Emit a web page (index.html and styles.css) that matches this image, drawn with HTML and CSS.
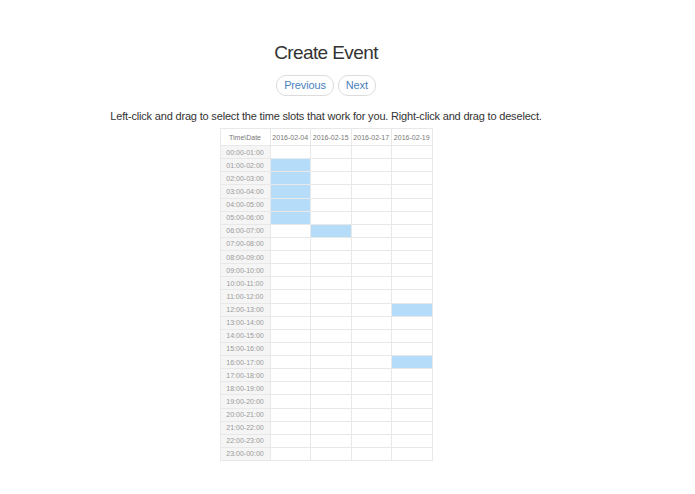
FILE: index.html
```html
<!DOCTYPE html>
<html>
<head>
<meta charset="utf-8">
<link rel="stylesheet" href="styles.css">
</head>
<body>
<div class="page">
  <h1 class="title">Create Event</h1>
  <div class="nav">
    <button class="btn">Previous</button>
    <button class="btn">Next</button>
  </div>
  <p class="hint">Left-click and drag to select the time slots that work for you. Right-click and drag to deselect.</p>
  <table class="grid">
    <colgroup><col class="c-time"><col><col><col><col></colgroup>
    <thead>
      <tr><th class="corner">Time\Date</th><th>2016-02-04</th><th>2016-02-15</th><th>2016-02-17</th><th>2016-02-19</th></tr>
    </thead>
    <tbody id="rows"></tbody>
  </table>
</div>
<script src="app.js"></script>
</body>
</html>
```
FILE: app.js
```js
var sel = {"1-0":1,"2-0":1,"3-0":1,"4-0":1,"5-0":1,"6-1":1,"12-3":1,"16-3":1};
var tb = document.getElementById('rows');
function pad(n){return (n<10?'0':'')+n;}
for (var h=0; h<24; h++){
  var tr = document.createElement('tr');
  var th = document.createElement('th');
  th.className = 'time';
  th.textContent = pad(h)+':00-'+pad((h+1)%24)+':00';
  tr.appendChild(th);
  for (var d=0; d<4; d++){
    var td = document.createElement('td');
    if (sel[h+'-'+d]) td.className = 'on';
    tr.appendChild(td);
  }
  tb.appendChild(tr);
}
```
FILE: styles.css
```css
html, body { margin: 0; padding: 0; background: #fff; }
body { font-family: "Liberation Sans", Arial, sans-serif; color: #333; }
.page { width: 652px; display: flex; flex-direction: column; align-items: center; padding-top: 42px; }
.title { margin: 0; font-size: 19px; letter-spacing: -0.6px; font-weight: normal; line-height: 22px; color: #333; }
.nav { display: flex; gap: 4px; margin-top: 11px; }
.btn {
  font-family: inherit; font-size: 11px; letter-spacing: -0.15px; color: #4a7fc0; background: #fff;
  border: 1px solid #dcdcdc; border-radius: 10px; height: 21px; padding: 0 7px; line-height: 19px;
}
.hint { margin: 14px 0 0; font-size: 11px; letter-spacing: -0.18px; line-height: 13px; color: #333; }
.grid {
  margin-top: 5px; border-collapse: collapse; table-layout: fixed; width: 213px;
  font-size: 7px; color: #888; border: 1px solid #dcdcdc;
}
.c-time { width: 50px; }
.grid th, .grid td { border: 1px solid #e8e8e8; padding: 0; font-weight: normal; }
.grid thead th { height: 16px; background: #fff; color: #777; }
.grid tbody tr { height: 13.13px; }
.grid th.time { background: #f5f5f5; color: #9a9a9a; }
.grid td.on { background: #b5dcf8; }
```
